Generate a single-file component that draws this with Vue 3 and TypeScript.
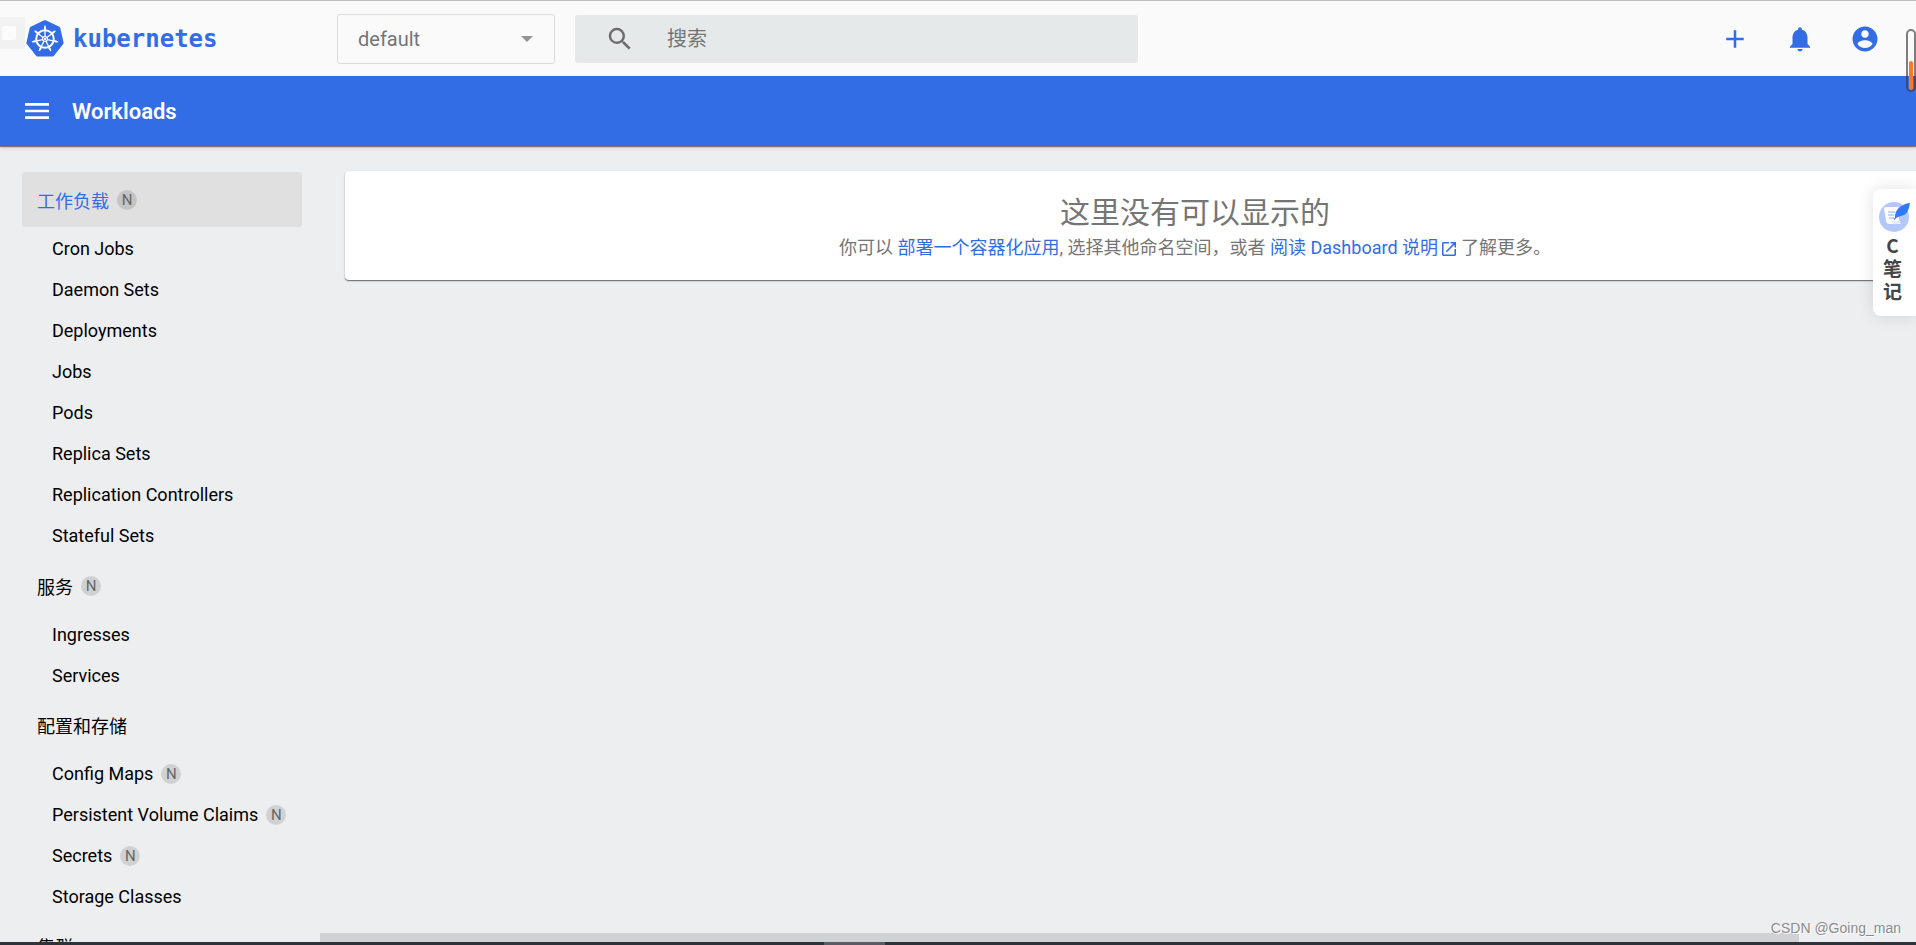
<script setup lang="ts">
interface NavItem {
  label: string
  namespaced?: boolean
}
interface NavGroup extends NavItem {
  active?: boolean
  items: NavItem[]
}

const groups: NavGroup[] = [
  {
    label: '工作负载',
    namespaced: true,
    active: true,
    items: [
      { label: 'Cron Jobs' },
      { label: 'Daemon Sets' },
      { label: 'Deployments' },
      { label: 'Jobs' },
      { label: 'Pods' },
      { label: 'Replica Sets' },
      { label: 'Replication Controllers' },
      { label: 'Stateful Sets' },
    ],
  },
  {
    label: '服务',
    namespaced: true,
    items: [{ label: 'Ingresses' }, { label: 'Services' }],
  },
  {
    label: '配置和存储',
    items: [
      { label: 'Config Maps', namespaced: true },
      { label: 'Persistent Volume Claims', namespaced: true },
      { label: 'Secrets', namespaced: true },
      { label: 'Storage Classes' },
    ],
  },
  { label: '集群', items: [] },
]

const spokes = Array.from({ length: 7 }, (_, i) => (i * 360) / 7)
</script>

<template>
  <div class="page">
    <header class="topbar">
      <a class="brand" href="#" aria-label="kubernetes">
        <svg class="logo" viewBox="-19 -19 38 38" aria-hidden="true">
          <path
            d="M0-17 13.5-10.6 16.8 3.8 7.5 15.6-7.5 15.6-16.8 3.8-13.5-10.6Z"
            fill="#326de6"
            stroke="#326de6"
            stroke-width="3.6"
            stroke-linejoin="round"
          />
          <g fill="none" stroke="#fff">
            <circle r="8.8" stroke-width="2" />
            <g v-for="a in spokes" :key="a" :transform="`rotate(${a})`">
              <path d="M0-2.5V-13.4" stroke-width="1.3" />
              <path d="M0-9.6V-12" stroke-width="2" />
            </g>
            <circle r="2.4" stroke-width="1.3" fill="#326de6" />
          </g>
          <circle r="1.2" fill="#fff" />
        </svg>
        <span class="brand-name">kubernetes</span>
      </a>
      <div class="namespace">
        <select aria-label="Namespace">
          <option>default</option>
        </select>
        <svg class="caret" viewBox="0 0 12 6" aria-hidden="true"><path d="M0 0h12L6 6z" fill="#949494" /></svg>
      </div>
      <label class="search">
        <svg class="icon" viewBox="0 0 24 24" aria-label="搜索">
          <path
            fill="#6b6d6d"
            d="M15.5 14h-.79l-.28-.27A6.47 6.47 0 0 0 16 9.5 6.5 6.5 0 1 0 9.5 16c1.61 0 3.09-.59 4.23-1.57l.27.28v.79l5 4.99L20.49 19l-4.99-5zm-6 0C7.01 14 5 11.99 5 9.5S7.01 5 9.5 5 14 7.01 14 9.5 11.99 14 9.5 14z"
          />
        </svg>
        <input type="text" placeholder="搜索" />
      </label>
      <nav class="actions">
        <button type="button" aria-label="Create">
          <svg class="icon" viewBox="0 0 24 24"><path d="M19 13h-6v6h-2v-6H5v-2h6V5h2v6h6z" /></svg>
        </button>
        <button type="button" aria-label="Notifications">
          <svg class="icon" viewBox="0 0 24 24">
            <path d="M12 22c1.1 0 2-.9 2-2h-4c0 1.1.89 2 2 2zm6-6v-5c0-3.07-1.64-5.64-4.5-6.32V4c0-.83-.67-1.5-1.5-1.5s-1.5.67-1.5 1.5v.68C7.63 5.36 6 7.92 6 11v5l-2 2v1h16v-1l-2-2z" />
          </svg>
        </button>
        <button type="button" aria-label="Account">
          <svg class="icon" viewBox="0 0 24 24">
            <path d="M12 2C6.48 2 2 6.48 2 12s4.48 10 10 10 10-4.48 10-10S17.52 2 12 2zm0 3c1.66 0 3 1.34 3 3s-1.34 3-3 3-3-1.34-3-3 1.34-3 3-3zm0 14.2c-2.5 0-4.71-1.28-6-3.22.03-1.99 4-3.08 6-3.08 1.99 0 5.97 1.09 6 3.08-1.29 1.94-3.5 3.22-6 3.22z" />
          </svg>
        </button>
      </nav>
    </header>

    <div class="titlebar">
      <button type="button" aria-label="Menu">
        <svg viewBox="0 0 24 24"><path fill="#fff" d="M3 18h18v-2H3v2zm0-5h18v-2H3v2zm0-7v2h18V6H3z" /></svg>
      </button>
      <h1>Workloads</h1>
    </div>

    <div class="body">
      <nav class="sidebar">
        <template v-for="group in groups" :key="group.label">
          <a href="#" class="group" :class="{ active: group.active }">
            {{ group.label }}<span v-if="group.namespaced" class="badge">N</span>
          </a>
          <ul v-if="group.items.length">
            <li v-for="item in group.items" :key="item.label">
              <a href="#" class="item">{{ item.label }}<span v-if="item.namespaced" class="badge">N</span></a>
            </li>
          </ul>
        </template>
      </nav>
      <main class="content">
        <section class="card">
          <h2>这里没有可以显示的</h2>
          <p>
            你可以 <a href="#">部署一个容器化应用</a>, 选择其他命名空间，或者
            <a href="#">阅读 Dashboard 说明
              <svg class="launch" viewBox="0 0 18 18" aria-hidden="true">
                <path d="M16 16H2V2h7V0H2C.9 0 0 .9 0 2v14c0 1.1.9 2 2 2h14c1.1 0 2-.9 2-2V9h-2zM11 0v2h3.6L4.8 11.8l1.4 1.4L16 3.4V7h2V0z" />
              </svg></a>
            了解更多。
          </p>
        </section>
        <div class="scroll-thumb"></div>
      </main>
    </div>
    <div class="strip"><span></span></div>

    <div class="edge-mark"><span></span></div>
    <div class="meter"><span></span></div>
    <button type="button" class="notes">
      <svg viewBox="0 0 32 32" aria-hidden="true">
        <circle cx="15" cy="16" r="15" fill="#b3c8f8" />
        <path d="M5 8q0-2 2-2h13v14q0 3 2 3H11q-4 0-4-4z" fill="#fff" />
        <path d="M9 11h7M9 14h6M10 17h5" stroke="#b3c8f8" stroke-width="1.3" />
        <path d="M13 20h8q0 3 2 3H15q-2 0-2-3z" fill="#e3ebff" />
        <path d="M16 18C15 9 22 3 31 2c-1 5-2 12-9 13-3 1-4 1-6 3z" fill="#2b7bf6" />
        <path d="M15 19C18 13 22 8 27 5" fill="none" stroke="#6e5ff0" stroke-width="1" />
      </svg>
      <span>C笔记</span>
    </button>
    <div class="watermark">CSDN @Going_man</div>
  </div>
</template>

<style>
body {
  margin: 0;
  background: #edeef0;
}
</style>

<style scoped>
.page {
  position: relative;
  display: flex;
  flex-direction: column;
  height: 100vh;
  overflow: hidden;
  background: #edeef0;
  font-family: Roboto, "Noto Sans CJK SC", sans-serif;
  font-size: 18px;
  color: #000;
}
a {
  color: inherit;
  text-decoration: none;
}
button {
  display: flex;
  align-items: center;
  justify-content: center;
  padding: 0;
  border: 0;
  background: none;
  cursor: pointer;
}
.icon {
  width: 30px;
  height: 30px;
}
.topbar {
  display: flex;
  flex: none;
  align-items: center;
  box-sizing: border-box;
  height: 76px;
  padding: 1px 36px 0 26px;
  border-top: 1px solid #bdbdbd;
  background: #fafafa;
}
.brand {
  display: flex;
  align-items: center;
  gap: 9px;
  width: 311px;
}
.logo {
  width: 38px;
  height: 38px;
}
.brand-name {
  font: bold 24px "DejaVu Sans Mono", monospace;
  color: #326de6;
}
.namespace {
  position: relative;
  width: 218px;
  margin-right: 20px;
}
.namespace select {
  display: block;
  box-sizing: border-box;
  width: 100%;
  height: 50px;
  padding: 0 20px;
  appearance: none;
  border: 1px solid #dcdcdc;
  border-radius: 3px;
  background: transparent;
  font: 20px Roboto, sans-serif;
  color: #757575;
}
.caret {
  position: absolute;
  top: 22px;
  right: 22px;
  width: 12px;
  height: 6px;
  pointer-events: none;
}
.search {
  display: flex;
  align-items: center;
  gap: 32px;
  box-sizing: border-box;
  width: 563px;
  height: 48px;
  padding: 0 30px;
  border-radius: 3px;
  background: #e5e9e9;
}
.search input {
  flex: 1;
  min-width: 0;
  padding: 0;
  border: 0;
  outline: 0;
  background: none;
  font: 20px Roboto, "Noto Sans CJK SC", sans-serif;
  color: #444;
}
.search input::placeholder {
  color: #757575;
}
.actions {
  display: flex;
  gap: 35px;
  margin-left: auto;
  fill: #326de6;
}
.titlebar {
  position: relative;
  display: flex;
  flex: none;
  align-items: center;
  gap: 19px;
  height: 70px;
  padding-left: 21px;
  background: #326de6;
  box-shadow: 0 1px 1px rgba(0, 0, 0, 0.45), 0 2px 4px rgba(0, 0, 0, 0.12);
}
.titlebar svg {
  width: 32px;
  height: 32px;
}
.titlebar h1 {
  margin: 0;
  font-size: 22px;
  font-weight: 600;
  color: #fff;
}
.body {
  display: flex;
  flex: 1;
  min-height: 0;
}
.sidebar {
  flex: none;
  box-sizing: border-box;
  width: 320px;
  padding: 25px 18px 0 22px;
  overflow: hidden;
}
.group,
.item {
  display: flex;
  align-items: center;
  gap: 8px;
}
.group {
  height: 55px;
  margin: 1px 0;
  padding-left: 15px;
}
.group.active {
  border-radius: 3px;
  background: #e0e0e0;
  color: #326de6;
}
.sidebar ul {
  margin: 0;
  padding: 0;
  list-style: none;
}
.group.active + ul {
  padding-bottom: 1px;
}
.item {
  height: 41px;
  padding-left: 30px;
}
.badge {
  width: 20px;
  height: 20px;
  border-radius: 50%;
  background: rgba(0, 0, 0, 0.12);
  font-size: 15px;
  line-height: 20px;
  text-align: center;
  color: #666;
}
.content {
  position: relative;
  flex: 1;
  min-width: 0;
  overflow: hidden;
}
.card {
  box-sizing: border-box;
  width: calc(100% + 104px);
  margin: 25px 0 0 25px;
  padding: 22px 24px 17px;
  border-radius: 4px;
  background: #fff;
  box-shadow: 0 1px 1px rgba(0, 0, 0, 0.5), 0 1px 3px rgba(0, 0, 0, 0.12);
  text-align: center;
  color: #757575;
}
.card h2 {
  margin: 0;
  font-size: 30px;
  font-weight: 400;
  line-height: 40px;
}
.card p {
  margin: 0;
  line-height: 30px;
}
.card a {
  color: #326de6;
}
.launch {
  width: 14px;
  height: 14px;
  vertical-align: -2px;
  fill: #326de6;
}
.scroll-thumb {
  position: absolute;
  bottom: 0;
  left: 0;
  width: 92.7%;
  height: 9px;
  background: #d0d1d3;
}
.strip {
  flex: none;
  height: 3px;
  padding-left: 43%;
  background: #2d333b;
}
.strip span {
  display: block;
  width: 61px;
  height: 3px;
  background: #5c5a65;
}
.edge-mark {
  position: absolute;
  top: 17px;
  left: 0;
  display: flex;
  align-items: center;
  box-sizing: border-box;
  width: 25px;
  height: 32px;
  padding-left: 2px;
  background: #f1f1f1;
}
.edge-mark span {
  width: 14px;
  height: 14px;
  border-radius: 2px;
  background: #fbfbfb;
}
.meter {
  position: absolute;
  top: 29px;
  right: 0;
  display: flex;
  align-items: flex-end;
  justify-content: center;
  box-sizing: border-box;
  width: 10px;
  height: 63px;
  border: 2px solid rgba(60, 60, 60, 0.65);
  border-radius: 5px;
}
.meter span {
  width: 4px;
  height: 29px;
  border-radius: 2px;
  background: #ff7a1f;
}
.notes {
  position: absolute;
  top: 189px;
  right: 0;
  flex-direction: column;
  justify-content: flex-start;
  box-sizing: border-box;
  width: 43px;
  padding: 12px 0 14px;
  border-radius: 8px 0 0 8px;
  background: #fff;
  box-shadow: 0 0 16px rgba(0, 0, 0, 0.12);
  font: bold 19px/23px "Noto Sans CJK SC", sans-serif;
  color: #454545;
}
.notes svg {
  width: 32px;
  height: 32px;
}
.notes span {
  width: 20px;
  margin-right: 4px;
  word-break: break-all;
}
.watermark {
  position: absolute;
  right: 15px;
  bottom: 7px;
  font: 14px/20px "Liberation Sans", sans-serif;
  color: #8a8b8d;
  text-shadow: 1px 1px 0 #fff;
}
</style>
